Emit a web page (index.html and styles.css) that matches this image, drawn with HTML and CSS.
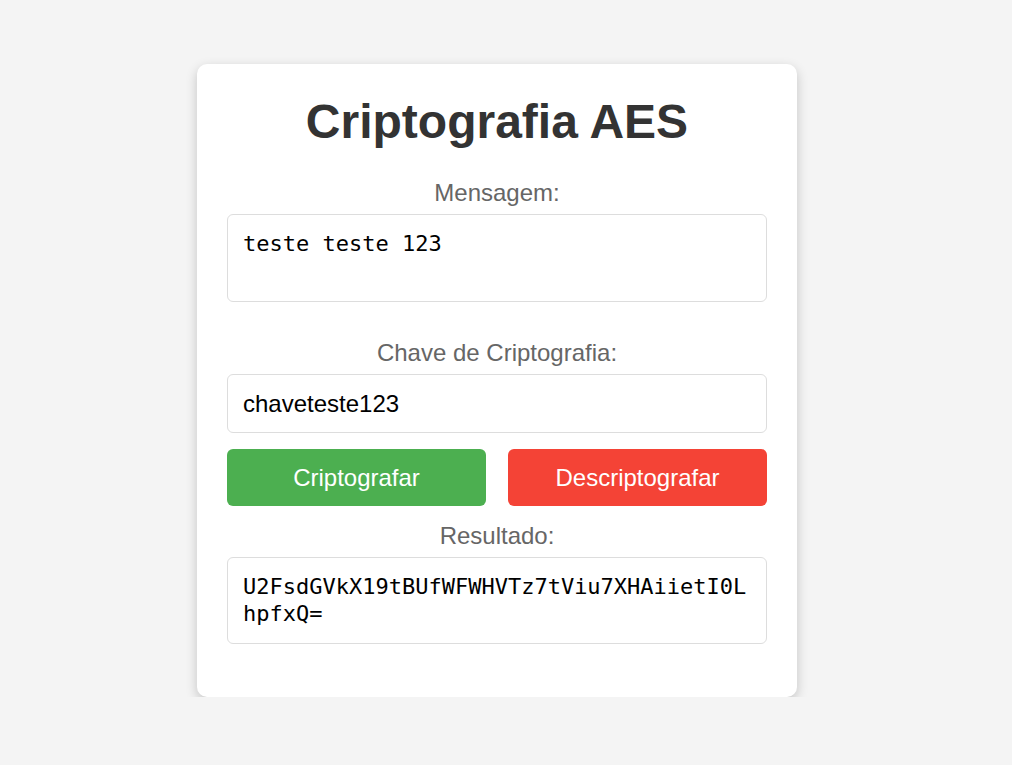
FILE: index.html
```html
<!DOCTYPE html>
<html lang="pt">
<head>
<meta charset="utf-8">
<title>Criptografia AES</title>
<link rel="stylesheet" href="styles.css">
</head>
<body>
<div class="card">
  <h1 class="title">Criptografia AES</h1>
  <label class="label" for="msg">Mensagem:</label>
  <textarea id="msg" class="field area">teste teste 123</textarea>
  <label class="label label-key" for="key">Chave de Criptografia:</label>
  <input id="key" class="field input" type="text" value="chaveteste123">
  <div class="actions">
    <button class="btn btn-green">Criptografar</button>
    <button class="btn btn-red">Descriptografar</button>
  </div>
  <div class="label label-result">Resultado:</div>
  <div class="field result">U2FsdGVkX19tBUfWFWHVTz7tViu7XHAiietI0LhpfxQ=</div>
</div>
</body>
</html>
```
FILE: styles.css
```css
html, body {
  margin: 0;
  background: #f4f4f4;
}
body {
  padding: 64px 18px 0 0;
  font-family: "Liberation Sans", Arial, sans-serif;
}
.card {
  width: 600px;
  box-sizing: border-box;
  margin: 0 auto;
  background: #fff;
  border-radius: 10px;
  padding: 30px;
  box-shadow: 0 4px 12px rgba(0, 0, 0, 0.2);
  display: flex;
  flex-direction: column;
}
.title {
  margin: 0 0 30px;
  font-size: 48px;
  line-height: 55px;
  font-weight: bold;
  color: #333;
  text-align: center;
}
.label {
  display: block;
  text-align: center;
  color: #666;
  font-size: 24px;
  line-height: 28px;
  margin-bottom: 7px;
}
.label-key {
  margin-top: 37px;
}
.label-result {
  margin-top: 16px;
}
.field {
  box-sizing: border-box;
  width: 540px;
  border: 1px solid #ddd;
  border-radius: 6px;
  background: #fff;
  color: #000;
  margin: 0;
}
.area, .result {
  padding: 15px;
  font-family: "DejaVu Sans Mono", monospace;
  font-size: 22px;
  line-height: 27px;
  resize: none;
  outline: none;
}
.area {
  height: 88px;
}
.result {
  height: 87px;
  word-break: break-all;
  margin-bottom: 23px;
}
.input {
  height: 59px;
  padding: 0 15px;
  font-family: "Liberation Sans", Arial, sans-serif;
  font-size: 24px;
  outline: none;
}
.actions {
  display: flex;
  gap: 22px;
  margin-top: 16px;
}
.btn {
  flex: 1;
  height: 57px;
  border: none;
  border-radius: 6px;
  color: #fff;
  font-family: "Liberation Sans", Arial, sans-serif;
  font-size: 24px;
  cursor: pointer;
}
.btn-green { background: #4caf50; }
.btn-red { background: #f44336; }
```
